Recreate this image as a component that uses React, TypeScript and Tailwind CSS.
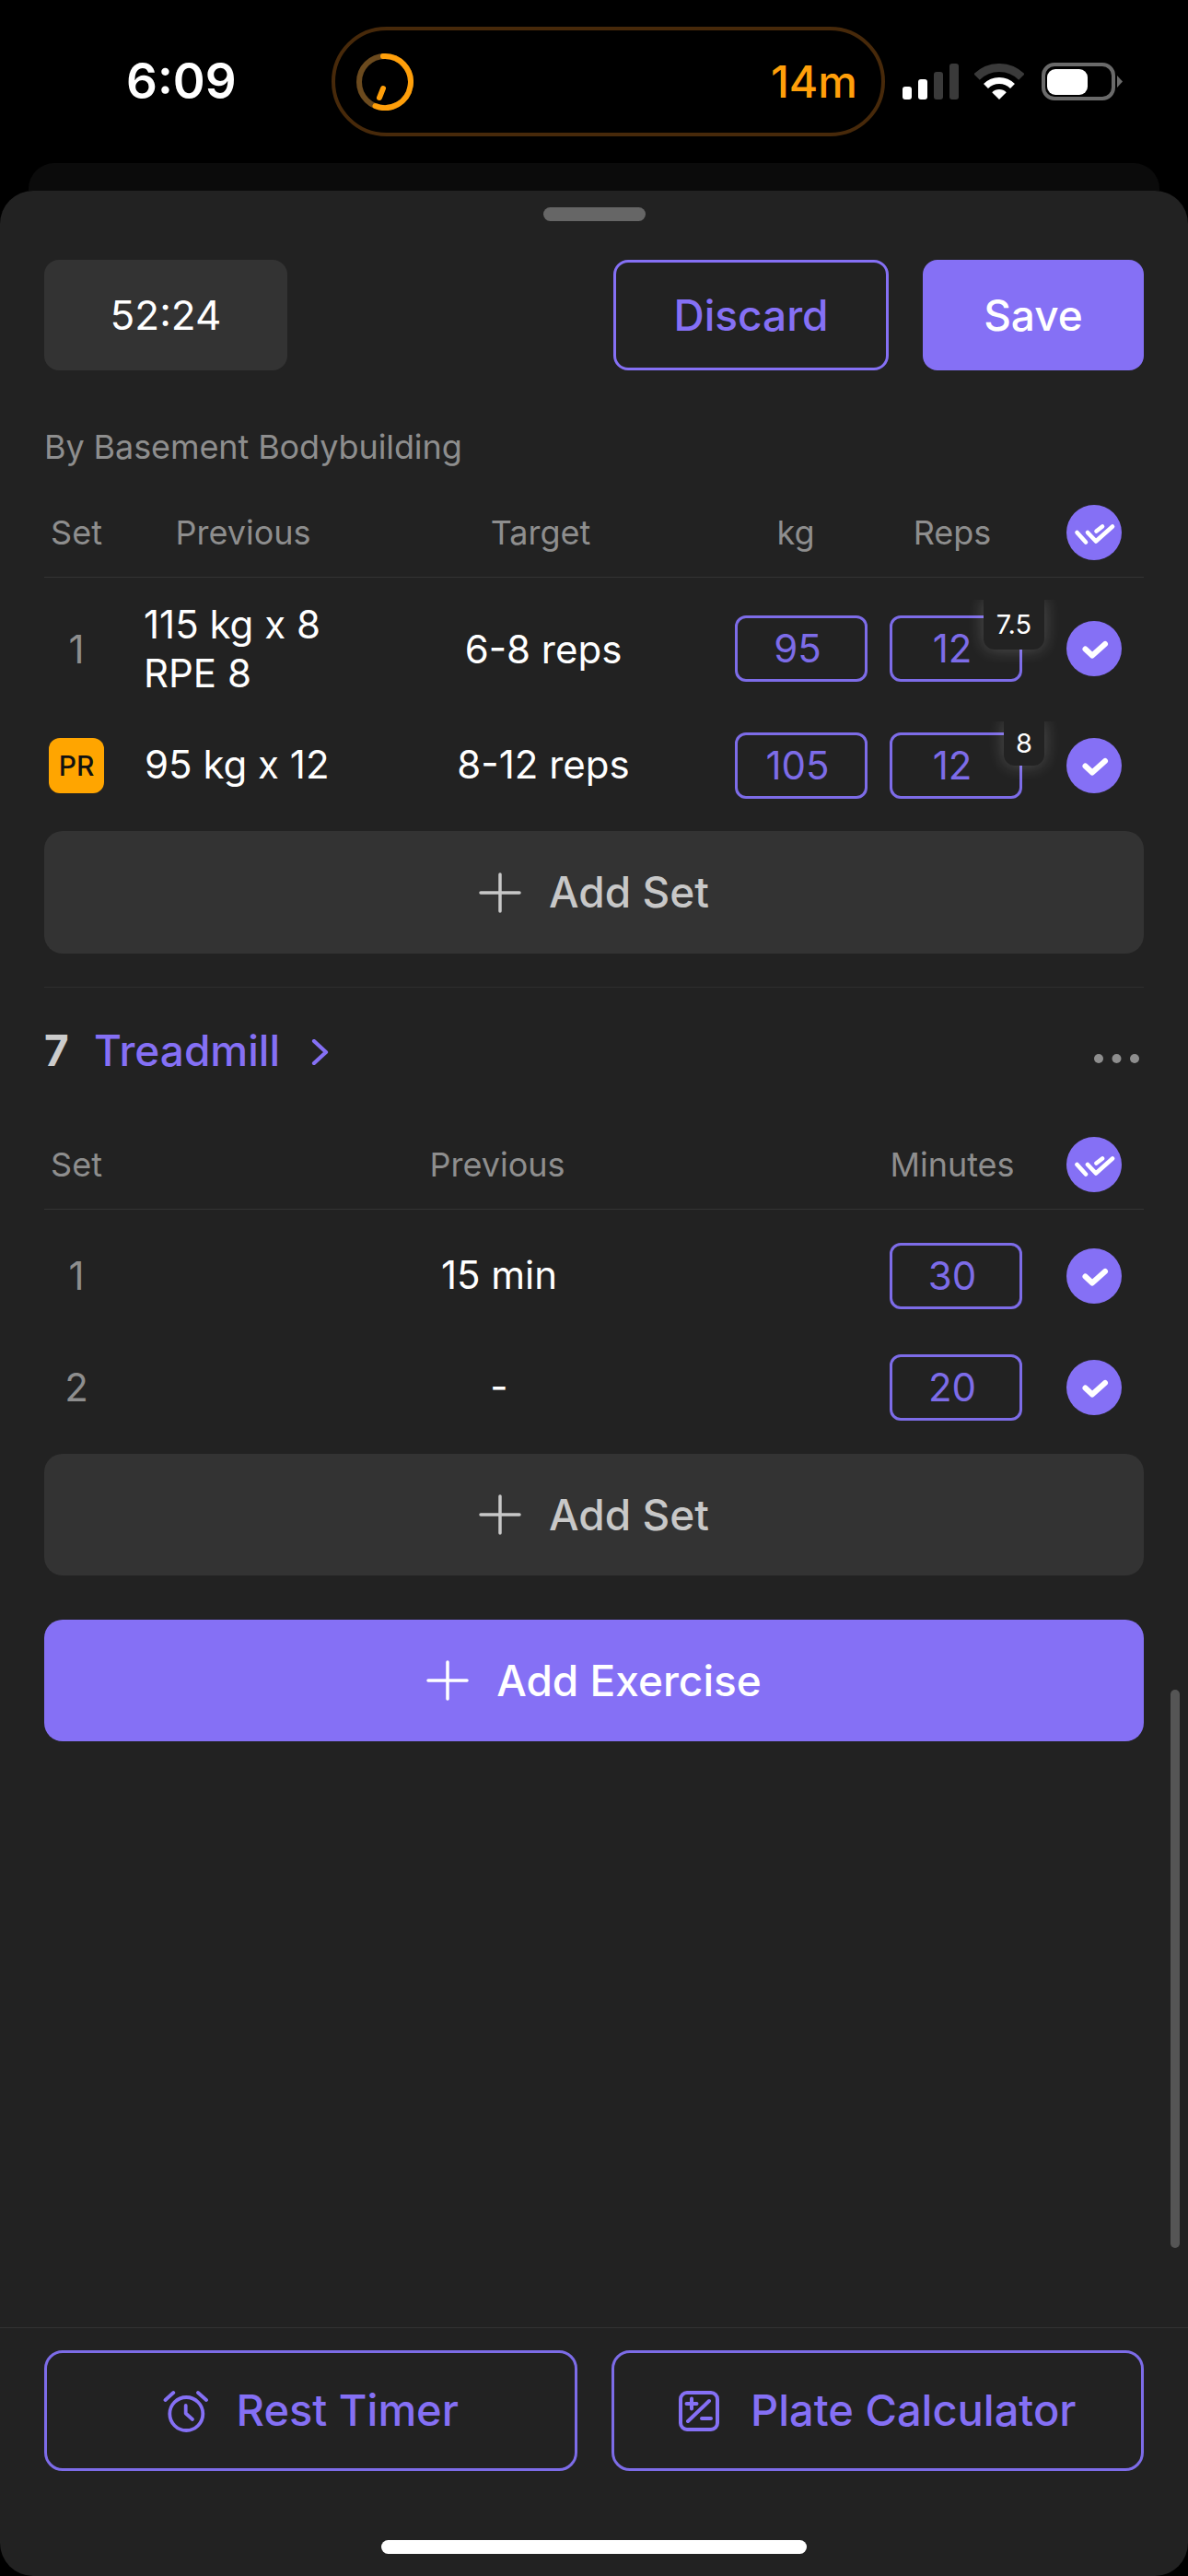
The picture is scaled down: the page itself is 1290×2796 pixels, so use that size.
import React from "react";

function Plus({ color = "#c8c8c8" }: { color?: string }) {
  return (
    <svg width="46" height="44" viewBox="0 0 46 44" fill="none" stroke={color} strokeWidth="3.5" strokeLinecap="round">
      <path d="M23 2V42M2 22H44" />
    </svg>
  );
}

function CheckCircle() {
  return (
    <div className="w-[60px] h-[60px] rounded-full bg-[#8570f5] shrink-0">
      <svg width="60" height="60" viewBox="0 0 60 60" fill="none" stroke="#fff" strokeWidth="6" strokeLinecap="round" strokeLinejoin="round">
        <path d="M20.5 30.5L28 37.5L42 25" />
      </svg>
    </div>
  );
}

function DoubleCheckCircle() {
  return (
    <div className="w-[60px] h-[60px] rounded-full bg-[#8570f5] shrink-0">
      <svg width="60" height="60" viewBox="0 0 60 60" fill="none" stroke="#fff" strokeWidth="4.6" strokeLinecap="round" strokeLinejoin="round">
        <path d="M11.5 30L21 40.5M23 30L32 39.5L50 23.5M32.5 28.5L39 23.5" />
      </svg>
    </div>
  );
}

function ValueBox({ value }: { value: string }) {
  return (
    <div className="w-[144px] h-[72px] shrink-0 rounded-[12px] border-[3px] border-[#7d6ce8] flex items-center justify-center pr-[8px] pb-[2px] text-[42px] text-[#7d6ce8]">
      {value}
    </div>
  );
}

function AddSet({ className }: { className: string }) {
  return (
    <div className={"rounded-[20px] bg-[#333333] flex items-center justify-center gap-[30px] text-[46px] font-medium text-[#c8c8c8] " + className}>
      <Plus />
      <span>Add Set</span>
    </div>
  );
}

function HeaderText({ children, className }: { children: React.ReactNode; className: string }) {
  return <div className={"text-[36px] text-[#8e8e8e] text-center shrink-0 " + className}>{children}</div>;
}

function StatusBar() {
  return (
    <div className="h-[177px] flex items-start pt-[29px] shrink-0">
      <div className="w-[360px] h-[119px] flex items-center pl-[137px] text-[53px] font-semibold text-white">6:09</div>
      <div className="w-[601px] h-[119px] rounded-full border-4 border-[#47290a] flex items-center justify-between pl-[23px] pr-[26px]">
        <svg width="62" height="62" viewBox="0 0 62 62" fill="none" strokeWidth="6" strokeLinecap="round">
          <circle cx="31" cy="31" r="28" stroke="#6b4a1e" />
          <path d="M29 3.1A28 28 0 1 1 20.5 57" stroke="#ff9f0a" />
          <path d="M29 38L25 48" stroke="#ff9f0a" />
        </svg>
        <span className="text-[48px] font-medium text-[#ff9f0a]">14m</span>
      </div>
      <div className="flex items-center h-[119px] ml-[19px]">
        <svg width="61" height="39" viewBox="0 0 61 39">
          <rect x="0" y="25" width="10" height="14" rx="3" fill="#fff" />
          <rect x="17" y="17" width="10" height="22" rx="3" fill="#fff" />
          <rect x="34" y="9" width="10" height="30" rx="3" fill="#3a3a3a" />
          <rect x="51" y="0" width="10" height="39" rx="3" fill="#3a3a3a" />
        </svg>
        <svg className="ml-[17px]" width="54" height="39" viewBox="0 0 54 39" fill="none">
          <path d="M2.6 14.6A34.5 34.5 0 0 1 51.4 14.6" stroke="#3a3a3a" strokeWidth="9" />
          <path d="M12.5 24.5A20.5 20.5 0 0 1 41.5 24.5" stroke="#fff" strokeWidth="7" />
          <path d="M27 39L19.2 31.2A11 11 0 0 1 34.8 31.2Z" fill="#fff" />
        </svg>
        <svg className="ml-[19px]" width="88" height="41" viewBox="0 0 88 41">
          <rect x="2" y="2" width="76" height="37" rx="12" fill="none" stroke="#6a6a6a" strokeWidth="4" />
          <rect x="6" y="7" width="44" height="28" rx="9" fill="#fff" />
          <path d="M82 14L88 20.5L82 27Z" fill="#6a6a6a" />
        </svg>
      </div>
    </div>
  );
}

export default function App() {
  return (
    <div className="w-[1290px] h-[2796px] bg-black flex flex-col overflow-hidden font-['Inter',sans-serif]">
      <StatusBar />
      <div className="h-[30px] mx-[31px] bg-[#0b0b0b] rounded-t-[28px] shrink-0" />

      <div className="relative flex-1 flex flex-col bg-[#222222] rounded-[36px]">
        <div className="w-[111px] h-[15px] mt-[18px] mx-auto rounded-full bg-[#666666] shrink-0" />

        <div className="flex-1 flex flex-col px-[48px]">
          <div className="mt-[42px] h-[120px] flex items-stretch shrink-0">
            <div className="w-[264px] rounded-[16px] bg-[#333333] flex items-center justify-center text-[44px] text-white">52:24</div>
            <div className="ml-auto w-[299px] rounded-[16px] border-[3px] border-[#8570f5] flex items-center justify-center text-[46px] font-medium text-[#8570f5]">Discard</div>
            <div className="ml-[37px] w-[240px] rounded-[16px] bg-[#8570f5] flex items-center justify-center text-[46px] font-medium text-white">Save</div>
          </div>

          <div className="mt-[58px] mb-[2px] h-[50px] flex items-center text-[36px] tracking-[-0.1px] text-[#8e8e8e]">By Basement Bodybuilding</div>

          {/* first table */}
          <div className="mt-[36px] h-[79px] pb-[19px] flex items-center border-b border-[#333333] shrink-0">
            <HeaderText className="w-[70px]">Set</HeaderText>
            <HeaderText className="w-[292px]">Previous</HeaderText>
            <HeaderText className="w-[360px] pr-[6px]">Target</HeaderText>
            <HeaderText className="w-[144px] ml-[28px] pr-[12px]">kg</HeaderText>
            <HeaderText className="w-[144px] ml-[24px] pr-[8px]">Reps</HeaderText>
            <div className="ml-[48px]"><DoubleCheckCircle /></div>
          </div>

          <div className="relative mt-[24px] h-[106px] flex items-center overflow-hidden shrink-0">
            <div className="w-[70px] text-center text-[42px] text-[#8e8e8e]">1</div>
            <div className="w-[292px] pl-[38px] text-[42px] leading-[53px] text-white">115 kg x 8<br />RPE 8</div>
            <div className="w-[360px] text-center text-[42px] text-white">6-8 reps</div>
            <div className="ml-[28px]"><ValueBox value="95" /></div>
            <div className="ml-[24px]"><ValueBox value="12" /></div>
            <div className="ml-[48px]"><CheckCircle /></div>
            <div className="absolute top-0 right-[108px] w-[66px] h-[54px] rounded-b-[12px] bg-[#222222] shadow-[0_0_18px_rgba(255,255,255,0.22)] flex items-center justify-center text-[29px] text-white">7.5</div>
          </div>

          <div className="relative mt-[26px] h-[96px] flex items-center overflow-hidden shrink-0">
            <div className="w-[70px] flex justify-center">
              <div className="w-[60px] h-[60px] rounded-[12px] bg-[#ffa500] flex items-center justify-center text-[30px] font-medium text-[#111111]">PR</div>
            </div>
            <div className="w-[292px] pl-[39px] pb-[3px] text-[42px] text-white">95 kg x 12</div>
            <div className="w-[360px] pb-[3px] text-center text-[42px] text-white">8-12 reps</div>
            <div className="ml-[28px]"><ValueBox value="105" /></div>
            <div className="ml-[24px]"><ValueBox value="12" /></div>
            <div className="ml-[48px]"><CheckCircle /></div>
            <div className="absolute top-0 right-[108px] w-[44px] h-[48px] rounded-b-[12px] bg-[#222222] shadow-[0_0_18px_rgba(255,255,255,0.22)] flex items-center justify-center text-[29px] text-white">8</div>
          </div>

          <AddSet className="mt-[23px] h-[133px] shrink-0" />

          <div className="mt-[36px] border-t border-[#2e2e2e] shrink-0" />

          {/* treadmill */}
          <div className="h-[136px] flex items-center shrink-0">
            <span className="w-[54px] text-[46px] font-bold text-[#cccccc]">7</span>
            <span className="text-[46px] font-medium text-[#8570f5]">Treadmill</span>
            <svg className="ml-[34px] mt-[4px]" width="19" height="28" viewBox="0 0 19 28" fill="none" stroke="#8570f5" strokeWidth="4.2" strokeLinecap="round" strokeLinejoin="round">
              <path d="M3 2L16 14L3 26" />
            </svg>
            <svg className="ml-auto mt-[18px] mr-[4px]" width="51" height="12" viewBox="0 0 51 12" fill="#8e8e8e">
              <circle cx="6" cy="6" r="5" />
              <circle cx="25.5" cy="6" r="5" />
              <circle cx="45" cy="6" r="5" />
            </svg>
          </div>

          <div className="mt-[26px] h-[79px] pb-[19px] flex items-center border-b border-[#333333] shrink-0">
            <HeaderText className="w-[70px]">Set</HeaderText>
            <HeaderText className="w-[848px] pr-[4px]">Previous</HeaderText>
            <HeaderText className="w-[144px] pr-[8px]">Minutes</HeaderText>
            <div className="ml-[48px]"><DoubleCheckCircle /></div>
          </div>

          <div className="mt-[36px] h-[72px] flex items-center shrink-0">
            <div className="w-[70px] text-center pb-[2px] text-[42px] text-[#8e8e8e]">1</div>
            <div className="w-[848px] text-center pb-[3px] text-[42px] text-white">15 min</div>
            <ValueBox value="30" />
            <div className="ml-[48px]"><CheckCircle /></div>
          </div>

          <div className="mt-[49px] h-[72px] flex items-center shrink-0">
            <div className="w-[70px] text-center pb-[2px] text-[42px] text-[#8e8e8e]">2</div>
            <div className="w-[848px] text-center pb-[3px] text-[42px] text-white">-</div>
            <ValueBox value="20" />
            <div className="ml-[48px]"><CheckCircle /></div>
          </div>

          <AddSet className="mt-[36px] h-[132px] shrink-0" />

          <div className="mt-[48px] h-[132px] rounded-[20px] bg-[#8570f5] flex items-center justify-center gap-[30px] text-[46px] font-medium text-white shrink-0">
            <Plus color="#ffffff" />
            <span>Add Exercise</span>
          </div>
        </div>

        {/* bottom bar */}
        <div className="border-t border-[#333333] pt-[24px] h-[270px] shrink-0">
          <div className="px-[48px] flex gap-[37px]">
            <div className="flex-1 h-[131px] rounded-[20px] border-[3px] border-[#7d6ce8] flex items-center justify-center gap-[30px] text-[47px] font-medium text-[#8570f5]">
              <svg width="50" height="46" viewBox="0 0 50 46" fill="none" stroke="#8570f5" strokeWidth="3.8" strokeLinecap="round" strokeLinejoin="round">
                <circle cx="25.3" cy="26" r="18" />
                <path d="M24.7 17V25.5L32 32" />
                <path d="M2.5 11L11.3 3M38 3L47 11" />
              </svg>
              <span>Rest Timer</span>
            </div>
            <div className="flex-1 h-[131px] rounded-[20px] border-[3px] border-[#7d6ce8] flex items-center justify-center gap-[34px] text-[47px] font-medium text-[#8570f5]">
              <svg width="44" height="44" viewBox="0 0 44 44" fill="none" stroke="#8570f5" strokeWidth="4" strokeLinecap="round">
                <rect x="2" y="2" width="40" height="40" rx="7" />
                <path d="M14 8.5V19.5M8.5 14H19.5M25 30H35M10 33L33 11" />
              </svg>
              <span>Plate Calculator</span>
            </div>
          </div>
          <div className="w-[462px] h-[15px] mt-[75px] mx-auto rounded-full bg-white" />
        </div>

        {/* scroll indicator */}
        <div className="absolute top-[1627px] right-[9px] w-[10px] h-[606px] rounded-full bg-[#555555]" />
      </div>
    </div>
  );
}
